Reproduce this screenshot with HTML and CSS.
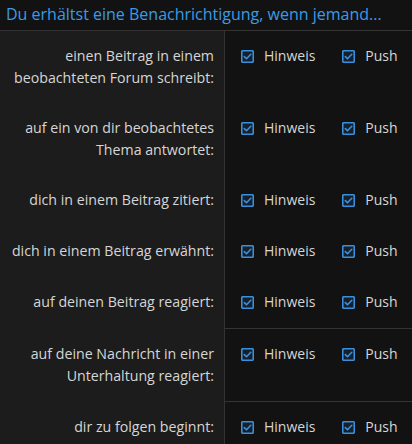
FILE: index.html
```html
<!DOCTYPE html>
<html lang="de">
<head>
<meta charset="utf-8">
<title>Benachrichtigungen</title>
<link rel="stylesheet" href="styles.css">
</head>
<body>
<div class="panel">
  <div class="header">Du erhältst eine Benachrichtigung, wenn jemand...</div>
  <div class="table">
    <div class="label tall">einen Beitrag in einem<br>beobachteten Forum schreibt:</div>
    <div class="opts tall">
      <span class="opt"><svg class="cb" viewBox="0 0 13 13"><rect x="0.75" y="0.75" width="11.5" height="11.5" rx="1"/><path d="M3.3 6.6 L5.5 8.8 L9.8 4.3"/></svg>Hinweis</span>
      <span class="opt"><svg class="cb" viewBox="0 0 13 13"><rect x="0.75" y="0.75" width="11.5" height="11.5" rx="1"/><path d="M3.3 6.6 L5.5 8.8 L9.8 4.3"/></svg>Push</span>
    </div>

    <div class="label tall">auf ein von dir beobachtetes<br>Thema antwortet:</div>
    <div class="opts tall">
      <span class="opt"><svg class="cb" viewBox="0 0 13 13"><rect x="0.75" y="0.75" width="11.5" height="11.5" rx="1"/><path d="M3.3 6.6 L5.5 8.8 L9.8 4.3"/></svg>Hinweis</span>
      <span class="opt"><svg class="cb" viewBox="0 0 13 13"><rect x="0.75" y="0.75" width="11.5" height="11.5" rx="1"/><path d="M3.3 6.6 L5.5 8.8 L9.8 4.3"/></svg>Push</span>
    </div>

    <div class="label">dich in einem Beitrag zitiert:</div>
    <div class="opts">
      <span class="opt"><svg class="cb" viewBox="0 0 13 13"><rect x="0.75" y="0.75" width="11.5" height="11.5" rx="1"/><path d="M3.3 6.6 L5.5 8.8 L9.8 4.3"/></svg>Hinweis</span>
      <span class="opt"><svg class="cb" viewBox="0 0 13 13"><rect x="0.75" y="0.75" width="11.5" height="11.5" rx="1"/><path d="M3.3 6.6 L5.5 8.8 L9.8 4.3"/></svg>Push</span>
    </div>

    <div class="label">dich in einem Beitrag erwähnt:</div>
    <div class="opts">
      <span class="opt"><svg class="cb" viewBox="0 0 13 13"><rect x="0.75" y="0.75" width="11.5" height="11.5" rx="1"/><path d="M3.3 6.6 L5.5 8.8 L9.8 4.3"/></svg>Hinweis</span>
      <span class="opt"><svg class="cb" viewBox="0 0 13 13"><rect x="0.75" y="0.75" width="11.5" height="11.5" rx="1"/><path d="M3.3 6.6 L5.5 8.8 L9.8 4.3"/></svg>Push</span>
    </div>

    <div class="label">auf deinen Beitrag reagiert:</div>
    <div class="opts">
      <span class="opt"><svg class="cb" viewBox="0 0 13 13"><rect x="0.75" y="0.75" width="11.5" height="11.5" rx="1"/><path d="M3.3 6.6 L5.5 8.8 L9.8 4.3"/></svg>Hinweis</span>
      <span class="opt"><svg class="cb" viewBox="0 0 13 13"><rect x="0.75" y="0.75" width="11.5" height="11.5" rx="1"/><path d="M3.3 6.6 L5.5 8.8 L9.8 4.3"/></svg>Push</span>
    </div>

    <div class="label tall sep">auf deine Nachricht in einer<br>Unterhaltung reagiert:</div>
    <div class="opts tall sep">
      <span class="opt"><svg class="cb" viewBox="0 0 13 13"><rect x="0.75" y="0.75" width="11.5" height="11.5" rx="1"/><path d="M3.3 6.6 L5.5 8.8 L9.8 4.3"/></svg>Hinweis</span>
      <span class="opt"><svg class="cb" viewBox="0 0 13 13"><rect x="0.75" y="0.75" width="11.5" height="11.5" rx="1"/><path d="M3.3 6.6 L5.5 8.8 L9.8 4.3"/></svg>Push</span>
    </div>

    <div class="label sep">dir zu folgen beginnt:</div>
    <div class="opts sep">
      <span class="opt"><svg class="cb" viewBox="0 0 13 13"><rect x="0.75" y="0.75" width="11.5" height="11.5" rx="1"/><path d="M3.3 6.6 L5.5 8.8 L9.8 4.3"/></svg>Hinweis</span>
      <span class="opt"><svg class="cb" viewBox="0 0 13 13"><rect x="0.75" y="0.75" width="11.5" height="11.5" rx="1"/><path d="M3.3 6.6 L5.5 8.8 L9.8 4.3"/></svg>Push</span>
    </div>
  </div>
</div>
</body>
</html>
```
FILE: styles.css
```css
html, body {
  margin: 0;
  padding: 0;
  background: #121212;
}

body {
  font-family: "Open Sans", "Noto Sans", sans-serif;
  color: #d6d6d6;
  width: 412px;
  height: 444px;
  overflow: hidden;
}

.panel {
  display: flex;
  flex-direction: column;
}

.header {
  height: 30px;
  line-height: 29px;
  padding-left: 6px;
  font-size: 16px;
  color: #3b9be6;
  border-bottom: 1px solid #333333;
  white-space: nowrap;
}

.table {
  display: grid;
  grid-template-columns: 225px 1fr;
}

.label {
  background: #1c1c1c;
  border-right: 1px solid #333333;
  text-align: right;
  padding: 14px 10px 15px 0;
  font-size: 14.2px;
  line-height: 22px;
  white-space: nowrap;
}

.opts {
  display: flex;
  align-items: flex-start;
  gap: 27px;
  padding: 14px 0 15px 16px;
  font-size: 14px;
  line-height: 22px;
}

.label.tall,
.opts.tall {
  padding-bottom: 14px;
}

.opts.sep {
  border-top: 1px solid #333333;
}

.label.sep {
  padding-top: 15px;
}

.opt {
  display: inline-flex;
  align-items: center;
  gap: 10px;
}

.cb {
  width: 13px;
  height: 13px;
  flex: none;
}

.cb rect {
  fill: #15202b;
  stroke: #3a90dc;
  stroke-width: 1.6;
}

.cb path {
  fill: none;
  stroke: #3a90dc;
  stroke-width: 1.6;
  stroke-linecap: round;
  stroke-linejoin: round;
}
```
